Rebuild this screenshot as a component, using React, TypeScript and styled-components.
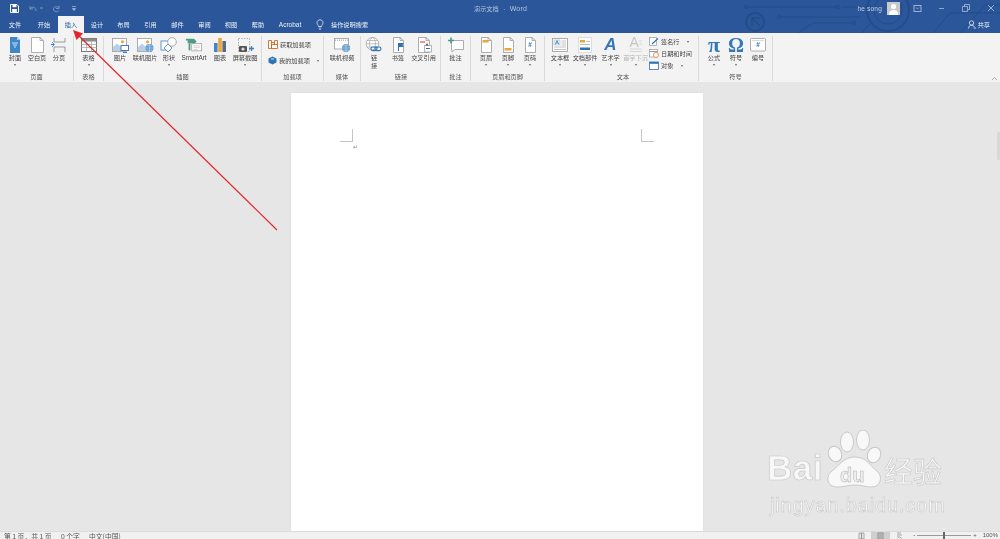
import React from "react";
import styled, { createGlobalStyle } from "styled-components";

const Global = createGlobalStyle`
  html, body { margin: 0; padding: 0; height: 100%; overflow: hidden; background: #e6e6e6; }
  #root { height: 100%; }
`;

const cjk = `"Noto Sans CJK SC", "Liberation Sans", sans-serif`;

const Window = styled.div`
  position: relative;
  width: 1000px;
  height: 539px;
  display: flex;
  flex-direction: column;
  overflow: hidden;
  font-family: ${cjk};
  font-size: 6.2px;
  color: #444;
  filter: blur(0.35px);
`;

const Header = styled.header`
  position: relative;
  height: 33px;
  flex: none;
  background: #2b579a;
  display: flex;
  flex-direction: column;
`;

const Circuit = styled.svg`
  position: absolute;
  left: 0;
  top: 0;
  pointer-events: none;
`;

const TitleBar = styled.div`
  position: relative;
  height: 16px;
  display: flex;
  align-items: center;
`;

const Quick = styled.div`
  width: 474px;
  flex: none;
  display: flex;
  align-items: center;
  padding-left: 10px;
  box-sizing: border-box;
  gap: 3px;
`;

const Title = styled.div`
  font-size: 6.2px;
  word-spacing: 3px;
  color: #b4c6e2;
  line-height: 15px;
`;

const Account = styled.div`
  margin-left: auto;
  margin-right: -3px;
  display: flex;
  align-items: center;
`;

const UserName = styled.span`
  font-family: "Liberation Sans", sans-serif;
  font-size: 6.5px;
  color: #c3d2e8;
  margin-right: 5px;
  letter-spacing: 0.2px;
`;

const Avatar = styled.div`
  width: 13px;
  height: 13px;
  background: #c9c9c9;
  margin-right: 5px;
  display: flex;
`;

const WinBtn = styled.div`
  width: 24.5px;
  height: 16px;
  display: flex;
  align-items: center;
  justify-content: center;
`;

const TabBar = styled.nav`
  position: relative;
  height: 17px;
  display: flex;
  align-items: stretch;
`;

const Tab = styled.div<{ $w: number; $active?: boolean }>`
  width: ${(p) => p.$w}px;
  flex: none;
  display: flex;
  align-items: center;
  justify-content: center;
  font-size: 6.2px;
  color: ${(p) => (p.$active ? "#2b579a" : "#eef2f8")};
  background: ${(p) => (p.$active ? "#f3f3f3" : "transparent")};
`;

const TabLatin = styled(Tab)`
  font-family: "Liberation Sans", sans-serif;
  font-size: 6.5px;
`;

const Bulb = styled.div`
  margin-left: 6px;
  width: 12px;
  display: flex;
  align-items: center;
  justify-content: center;
`;

const Search = styled.div`
  margin-left: 5px;
  display: flex;
  align-items: center;
  color: #eef2f8;
  font-size: 6.2px;
`;

const Share = styled.div`
  margin-left: auto;
  margin-right: 10px;
  display: flex;
  align-items: center;
  gap: 2px;
  color: #eef2f8;
  font-size: 6.2px;
`;

const Ribbon = styled.section`
  position: relative;
  height: 49px;
  flex: none;
  display: flex;
  align-items: flex-start;
  background: #f3f3f3;
`;

const Group = styled.div<{ $w: number; $pad?: number }>`
  width: ${(p) => p.$w}px;
  height: 45px;
  margin-top: 3px;
  flex: none;
  box-sizing: border-box;
  border-right: 1px solid #d9d9d9;
  padding-left: ${(p) => p.$pad ?? 0}px;
  display: flex;
  flex-direction: column;
`;

const Tools = styled.div`
  flex: 1;
  display: flex;
  min-height: 0;
`;

const GroupLabel = styled.div<{ $shift?: number }>`
  height: 8px;
  line-height: 8px;
  text-align: center;
  font-size: 6.2px;
  color: #555;
  margin-left: ${(p) => p.$shift ?? 0}px;
`;

const Tool = styled.div<{ $w: number }>`
  width: ${(p) => p.$w}px;
  flex: none;
  display: flex;
  flex-direction: column;
  align-items: center;
  padding-top: 1px;
`;

const IconBox = styled.div`
  height: 16px;
  width: 18px;
  display: flex;
  align-items: center;
  justify-content: center;
  position: relative;
`;

const ToolLabel = styled.div<{ $off?: boolean }>`
  margin-top: 1px;
  line-height: 8px;
  white-space: nowrap;
  text-align: center;
  font-size: 6.2px;
  color: ${(p) => (p.$off ? "#b5b5b5" : "#444")};
`;

const Latin = styled.span`
  font-family: "Liberation Sans", sans-serif;
  font-size: 6.4px;
`;

const TitleLatin = styled.span`
  font-family: "Liberation Sans", sans-serif;
  font-size: 7px;
  letter-spacing: 0.2px;
`;

const Caret = styled.div`
  margin-top: 2px;
  width: 0;
  height: 0;
  border-left: 1.5px solid transparent;
  border-right: 1.5px solid transparent;
  border-top: 2px solid #666;
`;

const RowStack = styled.div<{ $gap: number; $top: number; $left: number }>`
  display: flex;
  flex-direction: column;
  gap: ${(p) => p.$gap}px;
  padding-top: ${(p) => p.$top}px;
  padding-left: ${(p) => p.$left}px;
`;

const Row = styled.div`
  display: flex;
  align-items: center;
  height: 9px;
  gap: 2px;
  white-space: nowrap;
  font-size: 6.2px;
`;

const RowCaret = styled(Caret)<{ $gap: number }>`
  margin-top: 0;
  margin-left: ${(p) => p.$gap}px;
`;

const Glyph = styled.span<{ $c: string; $s: number; $i?: boolean; $b?: boolean; $f?: string }>`
  display: block;
  height: 16px;
  font-family: ${(p) => p.$f ?? `"Liberation Serif", serif`};
  font-size: ${(p) => p.$s}px;
  color: ${(p) => p.$c};
  font-style: ${(p) => (p.$i ? "italic" : "normal")};
  font-weight: ${(p) => (p.$b ? 700 : 400)};
  line-height: 16px;
`;

const Chevron = styled.svg`
  position: absolute;
  right: 2px;
  bottom: 1px;
`;

const DocArea = styled.main`
  flex: 1;
  min-height: 0;
  position: relative;
  background: #e6e6e6;
  padding: 11px 0 0 291px;
  display: flex;
  align-items: flex-start;
`;

const Page = styled.div`
  width: 412px;
  height: 438px;
  box-sizing: border-box;
  background: #fff;
  box-shadow: 0 0 1px #cfcfcf;
  padding: 36px 49px;
  display: flex;
  justify-content: space-between;
  align-items: flex-start;
`;

const MarginCol = styled.div`
  display: flex;
  flex-direction: column;
  align-items: flex-end;
`;

const Corner = styled.div<{ $side: "left" | "right" }>`
  width: 13px;
  height: 13px;
  box-sizing: border-box;
  border-bottom: 1px solid #c4c4c4;
  border-${(p) => p.$side}: 1px solid #c4c4c4;
`;

const ReturnMark = styled.span`
  font-family: "DejaVu Sans", sans-serif;
  font-size: 6px;
  line-height: 9px;
  color: #8a8a8a;
  margin-right: -5px;
`;

const ScrollHint = styled.div`
  position: absolute;
  right: 0;
  top: 50px;
  width: 3px;
  height: 28px;
  background: #d8d8d8;
  border-radius: 2px 0 0 2px;
`;

const Status = styled.footer`
  height: 8px;
  flex: none;
  background: #f1f1f1;
  border-top: 1px solid #dcdcdc;
  box-sizing: border-box;
  display: flex;
  align-items: flex-start;
  font-size: 6.8px;
  line-height: 9px;
  color: #555;
  padding-left: 4px;
`;

const StatusText = styled.span<{ $w: number }>`
  width: ${(p) => p.$w}px;
  flex: none;
  white-space: nowrap;
`;

const StatusRight = styled.div`
  margin-left: auto;
  display: flex;
  align-items: flex-start;
  height: 7px;
`;

const ViewBtn = styled.div<{ $on?: boolean }>`
  width: 19px;
  height: 7px;
  display: flex;
  justify-content: center;
  background: ${(p) => (p.$on ? "#cfcfcf" : "transparent")};
`;

const Zoom = styled.div`
  display: flex;
  align-items: center;
  height: 7px;
  margin-left: 4px;
  color: #555;
  font-family: "Liberation Sans", sans-serif;
  font-size: 6px;
`;

const Slider = styled.div`
  position: relative;
  width: 54px;
  height: 1px;
  background: #9a9a9a;
  margin: 0 2px;
`;

const Thumb = styled.div`
  position: absolute;
  left: 26px;
  top: -3px;
  width: 2px;
  height: 7px;
  background: #666;
`;

const Percent = styled.span`
  margin-left: 6px;
  margin-right: 2px;
`;

const Overlay = styled.svg`
  position: absolute;
  left: 0;
  top: 0;
  pointer-events: none;
`;

const Watermark = styled.div`
  position: absolute;
  left: 762px;
  top: 430px;
  width: 190px;
  height: 90px;
  pointer-events: none;
`;

const Paw = styled.svg`
  position: absolute;
  left: 0;
  top: 0;
`;

const WmBai = styled.span`
  position: absolute;
  left: 5px;
  top: 20px;
  font-family: "Liberation Sans", sans-serif;
  font-weight: 700;
  font-size: 35px;
  line-height: 36px;
  letter-spacing: 0.5px;
  color: #f8f8f8;
  -webkit-text-stroke: 0.7px #c8c8c8;
`;

const WmDu = styled.span`
  position: absolute;
  left: 78px;
  top: 36px;
  font-family: "Liberation Sans", sans-serif;
  font-weight: 700;
  font-size: 20px;
  line-height: 18px;
  color: #efefef;
  -webkit-text-stroke: 0.5px #b0b0b0;
`;

const WmCn = styled.span`
  position: absolute;
  left: 122px;
  top: 22px;
  font-family: ${cjk};
  font-size: 29px;
  line-height: 36px;
  color: #f8f8f8;
  -webkit-text-stroke: 0.6px #c8c8c8;
`;

const WmUrl = styled.span`
  position: absolute;
  left: 8px;
  top: 63px;
  font-family: "Liberation Sans", sans-serif;
  font-size: 20px;
  line-height: 24px;
  letter-spacing: 0.85px;
  color: #f6f6f6;
  -webkit-text-stroke: 0.5px #c4c4c4;
`;

const Svg: React.FC<{ children: React.ReactNode; w?: number; h?: number }> = ({ children, w = 18, h = 16 }) => (
  <svg width={w} height={h} viewBox={`0 0 ${w} ${h}`} fill="none">
    {children}
  </svg>
);

const G = "#9a9a9a";
const B = "#3d7fbf";
const O = "#eba63c";

const PageOutline = ({ x = 4, w = 10 }: { x?: number; w?: number }) => (
  <path d={`M${x}.5 .5H${x + w - 3}L${x + w}.5 3.5V15.5H${x}.5Z M${x + w - 3} .5V3.5H${x + w}`} stroke={G} fill="#fff" strokeWidth="0.8" />
);

const CoverIcon = () => (
  <Svg>
    <path d="M4 0H11L14 3V16H4Z" fill="#3f87c6" />
    <path d="M6 6H12M7 8H11M8 10H10" stroke="#cfe3f3" />
    <path d="M11 0L14 3H11Z" fill="#a8cde8" />
  </Svg>
);
const BlankIcon = () => <Svg><PageOutline x={3} w={12} /></Svg>;
const BreakIcon = () => (
  <Svg>
    <path d="M4 1V5H15V1M4 15V10H15V15" stroke={G} strokeWidth="1" />
    <path d="M1 7.5H4" stroke={B} strokeWidth="1.2" />
    <path d="M2 5L4.5 7.5L2 10" stroke={B} strokeWidth="0.8" />
  </Svg>
);
const TableIcon = () => (
  <Svg>
    <rect x="1.5" y="1.5" width="15" height="13" fill="#fff" stroke="#777" />
    <rect x="1.5" y="1.5" width="15" height="3" fill="#8a8a8a" />
    <path d="M1.5 7.5H16.5M1.5 10.5H16.5M6.5 4.5V14.5M11.5 4.5V14.5" stroke="#aaa" strokeWidth="0.8" />
  </Svg>
);
const PictureBase = () => (
  <>
    <rect x="1.5" y="1.5" width="14" height="13" fill="#fff" stroke={G} strokeWidth="0.8" />
    <path d="M2 14V10L6 6.5L10 10L12 9L15 11V14Z" fill="#b8d0e6" />
    <circle cx="11.5" cy="4.8" r="1.6" fill={O} />
  </>
);
const PictureIcon = () => (
  <Svg>
    <PictureBase />
    <rect x="10" y="8.5" width="7.5" height="5" fill="#fff" stroke={B} />
    <path d="M12 15.5H16" stroke={B} />
  </Svg>
);
const OnlinePicIcon = () => (
  <Svg>
    <PictureBase />
    <circle cx="13.5" cy="11" r="4" fill="#5b97cd" />
    <path d="M9.5 11H17.5M13.5 7V15M10.5 8.7H16.5M10.5 13.3H16.5" stroke="#d9e8f5" strokeWidth="0.5" />
  </Svg>
);
const ShapesIcon = () => (
  <Svg>
    <rect x="1" y="4" width="9" height="9" fill="#fff" stroke={B} strokeWidth="0.8" />
    <circle cx="12" cy="5" r="4.3" fill="#fff" stroke={G} strokeWidth="0.8" />
    <path d="M8 7L12 11L8 15L4 11Z" fill="#fff" stroke={B} strokeWidth="0.8" />
  </Svg>
);
const SmartArtIcon = () => (
  <Svg w={20}>
    <path d="M1 1H10L13 4L10 7H8V6H3V3H1Z" fill="#4f9b86" />
    <path d="M5 6V14" stroke="#4f9b86" strokeWidth="2" />
    <rect x="7.5" y="6.5" width="11" height="8" fill="#fff" stroke={G} strokeWidth="0.8" />
    <path d="M9.5 9H16.5M9.5 11H16.5M9.5 13H14" stroke="#bbb" strokeWidth="0.7" />
  </Svg>
);
const ChartIcon = () => (
  <Svg>
    <rect x="3" y="6" width="3.6" height="9" fill="#3f87c6" />
    <rect x="7.2" y="1" width="3.6" height="14" fill={O} />
    <rect x="11.4" y="4" width="3.6" height="11" fill="#5c6c7c" />
  </Svg>
);
const ScreenshotIcon = () => (
  <Svg>
    <rect x="2.5" y="1.5" width="11" height="13" stroke={G} strokeWidth="0.8" strokeDasharray="1.5 1.2" />
    <rect x="3" y="9" width="8" height="6" rx="1" fill="#555" />
    <circle cx="7" cy="12" r="1.6" fill="#ddd" />
    <path d="M13 11.5H18M15.5 9V14" stroke={B} strokeWidth="1.4" />
  </Svg>
);
const StoreIcon = () => (
  <Svg w={10} h={9}>
    <path d="M.5 .5H3.5V8.5H.5ZM3.5 4.5H9.5V8.5H3.5ZM6.5 .5H9.5V4.5H6.5ZM3.5 2.5H6.5" stroke="#d2691e" strokeWidth="0.9" fill="#fff" />
  </Svg>
);
const AddinIcon = () => (
  <Svg w={9} h={9}>
    <path d="M4.5 .5L8.5 2.5V6.5L4.5 8.5L.5 6.5V2.5Z" fill="#2f73b5" />
    <path d="M3 3H6" stroke="#fff" strokeWidth="0.8" />
  </Svg>
);
const VideoIcon = () => (
  <Svg>
    <rect x="1.5" y="1.5" width="14" height="10.5" fill="#fff" stroke={G} strokeWidth="0.8" />
    <path d="M2 3.2H15" stroke={G} strokeDasharray="1 1" strokeWidth="1" />
    <circle cx="13" cy="11" r="4" fill="#5b97cd" />
    <path d="M9 11H17M13 7V15M10 8.7H16M10 13.3H16" stroke="#d9e8f5" strokeWidth="0.5" />
  </Svg>
);
const LinkIcon = () => (
  <Svg>
    <circle cx="7.5" cy="6.8" r="6.3" stroke={G} strokeWidth="0.7" fill="#fff" />
    <ellipse cx="7.5" cy="6.8" rx="3" ry="6.3" stroke={G} strokeWidth="0.6" />
    <path d="M1.2 6.8H13.8M2 3.5H13M2 10H13" stroke={G} strokeWidth="0.6" />
    <rect x="6" y="10" width="6" height="3.6" rx="1.8" stroke="#2f73b5" strokeWidth="1.1" fill="none" />
    <rect x="10" y="10" width="6" height="3.6" rx="1.8" stroke="#2f73b5" strokeWidth="1.1" fill="none" />
  </Svg>
);
const BookmarkIcon = () => (
  <Svg>
    <PageOutline x={4} w={10} />
    <path d="M9 6H15L13.5 8L15 10H10V14H9Z" fill="#2f73b5" />
  </Svg>
);
const CrossRefIcon = () => (
  <Svg>
    <PageOutline x={3} w={11} />
    <path d="M5 5H10" stroke="#d9534f" strokeWidth="1.2" />
    <rect x="9.5" y="8.5" width="7" height="6.5" fill="#fff" stroke={G} strokeWidth="0.7" />
    <path d="M11 11.5H15" stroke="#2f73b5" strokeWidth="1" />
    <path d="M12 6L13.5 8.5H10.5Z" fill="#555" />
  </Svg>
);
const CommentIcon = () => (
  <Svg>
    <path d="M4.5 3.5H16.5V12.5H8L5 15V12.5H4.5Z" fill="#fff" stroke={G} strokeWidth="0.8" />
    <path d="M1 3.5H7M4 .5V6.5" stroke="#4f9b86" strokeWidth="1.6" />
  </Svg>
);
const HeaderIcon = () => (
  <Svg>
    <PageOutline />
    <rect x="5.5" y="3" width="6" height="2.5" fill={O} />
  </Svg>
);
const FooterIcon = () => (
  <Svg>
    <PageOutline />
    <rect x="5.5" y="11" width="7" height="2.5" fill={O} />
  </Svg>
);
const PageNumIcon = () => (
  <IconBox>
    <Svg><PageOutline /></Svg>
  </IconBox>
);
const TextBoxIcon = () => (
  <Svg>
    <rect x="1.5" y="1.5" width="15" height="13" fill="#fff" stroke={G} strokeWidth="0.8" />
    <rect x="3" y="3" width="6" height="5" fill="#e7f0f8" stroke="#9fb9d3" strokeWidth="0.5" />
    <path d="M4.2 7.5L6 3.5L7.8 7.5M5 6H7" stroke="#2f73b5" strokeWidth="0.7" />
    <path d="M10.5 4H15M10.5 6H15M10.5 8H15M3 10H15M3 12.5H15" stroke="#aaa" strokeWidth="0.7" />
  </Svg>
);
const QuickPartsIcon = () => (
  <Svg>
    <rect x="2" y="0" width="14" height="16" fill="#dcdcdc" />
    <rect x="3" y="1" width="12" height="14" fill="#fff" />
    <rect x="4" y="3" width="5" height="2.5" fill={O} />
    <path d="M4 7.5H14M10.5 4.5H14" stroke="#aaa" strokeWidth="0.8" />
    <rect x="4" y="10.5" width="10" height="2.5" fill="#2f73b5" />
  </Svg>
);
const DropCapIcon = () => (
  <Svg>
    <path d="M3 12H15M3 14.5H15M12 4H15M12 7H15" stroke="#cfcfcf" strokeWidth="0.8" />
  </Svg>
);
const SignIcon = () => (
  <Svg w={10} h={9}>
    <rect x="0.5" y="0.5" width="7" height="8" fill="#fff" stroke={G} strokeWidth="0.7" />
    <path d="M3 7L9 1.5" stroke="#2f73b5" strokeWidth="1.1" />
  </Svg>
);
const DateIcon = () => (
  <Svg w={10} h={9}>
    <rect x="0.5" y="0.5" width="8" height="7.5" fill="#fff" stroke={G} strokeWidth="0.7" />
    <path d="M.5 2.5H8.5" stroke={G} />
    <circle cx="7" cy="6" r="2.5" fill="#fff" stroke="#c8742a" strokeWidth="0.7" />
  </Svg>
);
const ObjectIcon = () => (
  <Svg w={10} h={9}>
    <rect x="0.5" y="1" width="9" height="7.5" fill="#fff" stroke="#2f73b5" strokeWidth="0.8" />
    <rect x="0.5" y="1" width="9" height="1.8" fill="#2f73b5" />
  </Svg>
);
const NumberIcon = () => (
  <Svg>
    <rect x="1.5" y="1.5" width="15" height="12.5" rx="1" fill="#fff" stroke={G} strokeWidth="0.8" />
    <path d="M3 3.5H15" stroke="#ddd" strokeWidth="1.2" />
  </Svg>
);

const NumGlyph = styled.span`
  position: absolute;
  left: 0;
  right: 0;
  top: 2px;
  text-align: center;
  font-family: "Liberation Sans", sans-serif;
  font-weight: 700;
  font-size: 6.5px;
  line-height: 12px;
  color: #2f73b5;
`;

const DropGlyph = styled.span`
  position: absolute;
  left: 3px;
  top: -3px;
  font-family: "Liberation Sans", sans-serif;
  font-size: 14px;
  line-height: 16px;
  color: #c6c6c6;
`;

const Item: React.FC<{
  w: number;
  icon: React.ReactNode;
  label: React.ReactNode;
  caret?: boolean;
  off?: boolean;
}> = ({ w, icon, label, caret, off }) => (
  <Tool $w={w}>
    <IconBox>{icon}</IconBox>
    <ToolLabel $off={off}>{label}</ToolLabel>
    {caret && <Caret />}
  </Tool>
);

const tabs: [string, number][] = [
  ["文件", 30], ["开始", 28], ["插入", 26], ["设计", 26], ["布局", 27],
  ["引用", 27], ["邮件", 27], ["审阅", 27], ["视图", 26], ["帮助", 28],
];

const glyphBlue = "#3478ba";

export default function App() {
  return (
    <Window>
      <Global />
      <Header>
        <Circuit width="1000" height="33" viewBox="0 0 1000 33" fill="none" stroke="#234c88" strokeWidth="1">
          <circle cx="755" cy="22" r="9" strokeWidth="2" />
          <path d="M752 26V18H760M753 19L760 26" strokeWidth="1.5" />
          <circle cx="746" cy="7" r="1.5" />
          <path d="M748 7H838M781 17H860M880 7H842" />
          <circle cx="779" cy="17" r="1.5" />
          <circle cx="854" cy="23" r="1.5" />
          <path d="M798 33L813 23H853" />
          <circle cx="888" cy="10" r="21" strokeWidth="2" />
          <circle cx="888" cy="10" r="14" />
          <path d="M933 33L950 13H1000M960 33L985 5H1000M862 33L870 23" />
          <circle cx="838" cy="7" r="2" />
        </Circuit>
        <TitleBar>
          <Quick>
            <Svg w={9} h={9}>
              <path d="M.5 .5H7L8.5 2V8.5H.5Z" fill="none" stroke="#fff" strokeWidth="1" />
              <rect x="2.5" y="1" width="4" height="2.2" fill="#fff" />
              <rect x="2.2" y="5" width="4.6" height="3.5" fill="#fff" />
            </Svg>
            <span style={{ width: 3 }} />
            <Svg w={9} h={9}>
              <path d="M2 2V5H5M2.3 4.8C4 2 8 3 8 7" stroke="#7f9cc7" strokeWidth="0.9" />
            </Svg>
            <Svg w={3} h={9}><path d="M0 4H3" stroke="#7f9cc7" /></Svg>
            <span style={{ width: 3 }} />
            <Svg w={9} h={9}>
              <path d="M7 1.5V4.5H4M7 4.5C5.5 1.5 1.5 2.5 1.5 5C1.5 8 5.5 8.5 7 6.5" stroke="#7f9cc7" strokeWidth="0.9" />
            </Svg>
            <span style={{ width: 4 }} />
            <Svg w={6} h={9}>
              <path d="M1 2.5H5M1.5 4.5L3 6.5L4.5 4.5Z" stroke="#a9bedd" strokeWidth="0.7" fill="#a9bedd" />
            </Svg>
          </Quick>
          <Title>演示文档 - <TitleLatin>Word</TitleLatin></Title>
          <Account>
            <UserName>he song</UserName>
            <Avatar>
              <Svg w={13} h={13}>
                <circle cx="6.5" cy="4.5" r="2.6" fill="#fff" />
                <path d="M2 13C2 9 4 8 6.5 8S11 9 11 13Z" fill="#fff" />
              </Svg>
            </Avatar>
            <WinBtn>
              <Svg w={9} h={7}>
                <rect x="1" y="0.5" width="7" height="6" stroke="#b6c8e2" strokeWidth="0.8" />
                <path d="M3 2.5L4.5 4L6 2.5" stroke="#b6c8e2" strokeWidth="0.6" />
              </Svg>
            </WinBtn>
            <WinBtn><Svg w={7} h={7}><path d="M1 3.5H6" stroke="#8aa6cf" /></Svg></WinBtn>
            <WinBtn>
              <Svg w={8} h={8}>
                <path d="M2.5 2V.5H7.5V5.5H6M.5 2.5H5.5V7.5H.5Z" stroke="#a9bedd" strokeWidth="0.8" />
              </Svg>
            </WinBtn>
            <WinBtn>
              <Svg w={8} h={8}><path d="M1 1L7 7M7 1L1 7" stroke="#b6c8e2" strokeWidth="0.8" /></Svg>
            </WinBtn>
          </Account>
        </TitleBar>
        <TabBar>
          {tabs.map(([t, w]) => (
            <Tab key={t} $w={w} $active={t === "插入"}>{t}</Tab>
          ))}
          <TabLatin $w={36}>Acrobat</TabLatin>
          <Bulb>
            <Svg w={8} h={11}>
              <path d="M2.5 7.5C2.5 6 1 5.5 1 3.8C1 2 2.4 .8 4 .8S7 2 7 3.8C7 5.5 5.5 6 5.5 7.5ZM2.8 9H5.2M3.2 10.4H4.8" stroke="#dfe7f3" strokeWidth="0.8" />
            </Svg>
          </Bulb>
          <Search>操作说明搜索</Search>
          <Share>
            <Svg w={8} h={9}>
              <circle cx="3.5" cy="3" r="2.2" stroke="#e8eef7" strokeWidth="0.8" />
              <path d="M.5 8.5C.8 6 2 5.3 3.5 5.3S6 6 6.5 7M5.5 8H8" stroke="#e8eef7" strokeWidth="0.8" />
            </Svg>
            共享
          </Share>
        </TabBar>
      </Header>

      <Ribbon>
        <Group $w={74} $pad={4}>
          <Tools>
            <Item w={22} icon={<CoverIcon />} label="封面" caret />
            <Item w={22} icon={<BlankIcon />} label="空白页" />
            <Item w={22} icon={<BreakIcon />} label="分页" />
          </Tools>
          <GroupLabel $shift={-4}>页面</GroupLabel>
        </Group>
        <Group $w={30}>
          <Tools><Item w={29} icon={<TableIcon />} label="表格" caret /></Tools>
          <GroupLabel>表格</GroupLabel>
        </Group>
        <Group $w={158} $pad={4}>
          <Tools>
            <Item w={24} icon={<PictureIcon />} label="图片" />
            <Item w={26} icon={<OnlinePicIcon />} label="联机图片" />
            <Item w={22} icon={<ShapesIcon />} label="形状" caret />
            <Item w={28} icon={<SmartArtIcon />} label={<Latin>SmartArt</Latin>} />
            <Item w={24} icon={<ChartIcon />} label="图表" />
            <Item w={26} icon={<ScreenshotIcon />} label="屏幕截图" caret />
          </Tools>
          <GroupLabel $shift={-4}>插图</GroupLabel>
        </Group>
        <Group $w={62}>
          <Tools>
            <RowStack $gap={7} $top={4} $left={6}>
              <Row><StoreIcon />获取加载项</Row>
              <Row><AddinIcon />我的加载项<RowCaret $gap={5} /></Row>
            </RowStack>
          </Tools>
          <GroupLabel>加载项</GroupLabel>
        </Group>
        <Group $w={37}>
          <Tools><Item w={36} icon={<VideoIcon />} label="联机视频" /></Tools>
          <GroupLabel>媒体</GroupLabel>
        </Group>
        <Group $w={80} $pad={1}>
          <Tools>
            <Item w={24} icon={<LinkIcon />} label={<>链<br />接</>} />
            <Item w={24} icon={<BookmarkIcon />} label="书签" />
            <Item w={27} icon={<CrossRefIcon />} label="交叉引用" />
          </Tools>
          <GroupLabel>链接</GroupLabel>
        </Group>
        <Group $w={30}>
          <Tools><Item w={29} icon={<CommentIcon />} label="批注" /></Tools>
          <GroupLabel>批注</GroupLabel>
        </Group>
        <Group $w={74} $pad={4}>
          <Tools>
            <Item w={22} icon={<HeaderIcon />} label="页眉" caret />
            <Item w={22} icon={<FooterIcon />} label="页脚" caret />
            <Item w={22} icon={<><PageNumIcon /><NumGlyph>#</NumGlyph></>} label="页码" caret />
          </Tools>
          <GroupLabel $shift={-4}>页眉和页脚</GroupLabel>
        </Group>
        <Group $w={154} $pad={3}>
          <Tools>
            <Item w={24} icon={<TextBoxIcon />} label="文本框" caret />
            <Item w={26} icon={<QuickPartsIcon />} label="文档部件" caret />
            <Item w={25} icon={<Glyph $c={glyphBlue} $s={17} $i $b $f={`"Liberation Sans", sans-serif`}>A</Glyph>} label="艺术字" caret />
            <Item w={25} icon={<><DropCapIcon /><DropGlyph>A</DropGlyph></>} label="首字下沉" caret off />
            <RowStack $gap={3} $top={1} $left={1}>
              <Row><SignIcon />签名行<RowCaret $gap={5} /></Row>
              <Row><DateIcon />日期和时间</Row>
              <Row><ObjectIcon />对象<RowCaret $gap={6} /></Row>
            </RowStack>
          </Tools>
          <GroupLabel>文本</GroupLabel>
        </Group>
        <Group $w={74} $pad={4}>
          <Tools>
            <Item w={22} icon={<Glyph $c={glyphBlue} $s={22} $b>π</Glyph>} label="公式" caret />
            <Item w={22} icon={<Glyph $c={glyphBlue} $s={20} $b>Ω</Glyph>} label="符号" caret />
            <Item w={22} icon={<><NumberIcon /><NumGlyph>#</NumGlyph></>} label="编号" />
          </Tools>
          <GroupLabel $shift={-4}>符号</GroupLabel>
        </Group>
        <Chevron width="7" height="5" viewBox="0 0 7 5" fill="none">
          <path d="M1 4L3.5 1.5L6 4" stroke="#888" strokeWidth="0.7" />
        </Chevron>
      </Ribbon>

      <DocArea>
        <Page>
          <MarginCol>
            <Corner $side="right" />
            <ReturnMark>↵</ReturnMark>
          </MarginCol>
          <Corner $side="left" />
        </Page>
        <ScrollHint />
      </DocArea>

      <Status>
        <StatusText $w={57}>第 1 页，共 1 页</StatusText>
        <StatusText $w={28}>0 个字</StatusText>
        <StatusText $w={40}>中文(中国)</StatusText>
        <StatusRight>
          <ViewBtn><Svg w={7} h={7}><path d="M1 1H3.3V7H1ZM3.7 1H6V7H3.7Z" stroke="#777" strokeWidth="0.6" /></Svg></ViewBtn>
          <ViewBtn $on><Svg w={7} h={7}><path d="M1 1H6V7H1ZM2 3H5M2 5H5" stroke="#666" strokeWidth="0.6" /></Svg></ViewBtn>
          <ViewBtn><Svg w={7} h={7}><path d="M1 1H5M1 3H6M1 5H4L6 7" stroke="#777" strokeWidth="0.6" /></Svg></ViewBtn>
          <Zoom>
            -
            <Slider><Thumb /></Slider>
            +
            <Percent>100%</Percent>
          </Zoom>
        </StatusRight>
      </Status>

      <Watermark>
        <Paw width="190" height="90" viewBox="0 0 190 90" fill="#f8f8f8" stroke="#c4c4c4" strokeWidth="0.9">
          <ellipse cx="85" cy="12" rx="6.5" ry="10" />
          <ellipse cx="101" cy="10" rx="6.5" ry="10" />
          <ellipse cx="73" cy="24" rx="6.5" ry="8" transform="rotate(-25 73 24)" />
          <ellipse cx="112" cy="25" rx="6.5" ry="8" transform="rotate(25 112 25)" />
          <path d="M93 27C105 27 108 36 115 41C121 46 119 57 110 57C103 57 100 55 93 55C86 55 82 57 75 57C65 57 63 46 70 41C77 36 81 27 93 27Z" />
        </Paw>
        <WmBai>Bai</WmBai>
        <WmDu>du</WmDu>
        <WmCn>经验</WmCn>
        <WmUrl>jingyan.baidu.com</WmUrl>
      </Watermark>

      <Overlay width="1000" height="539" viewBox="0 0 1000 539" fill="none">
        <path d="M277 230L77 34" stroke="#e3262a" strokeWidth="1.2" />
        <path d="M73 30L83 33.5L76.5 40Z" fill="#e3262a" />
      </Overlay>
    </Window>
  );
}
